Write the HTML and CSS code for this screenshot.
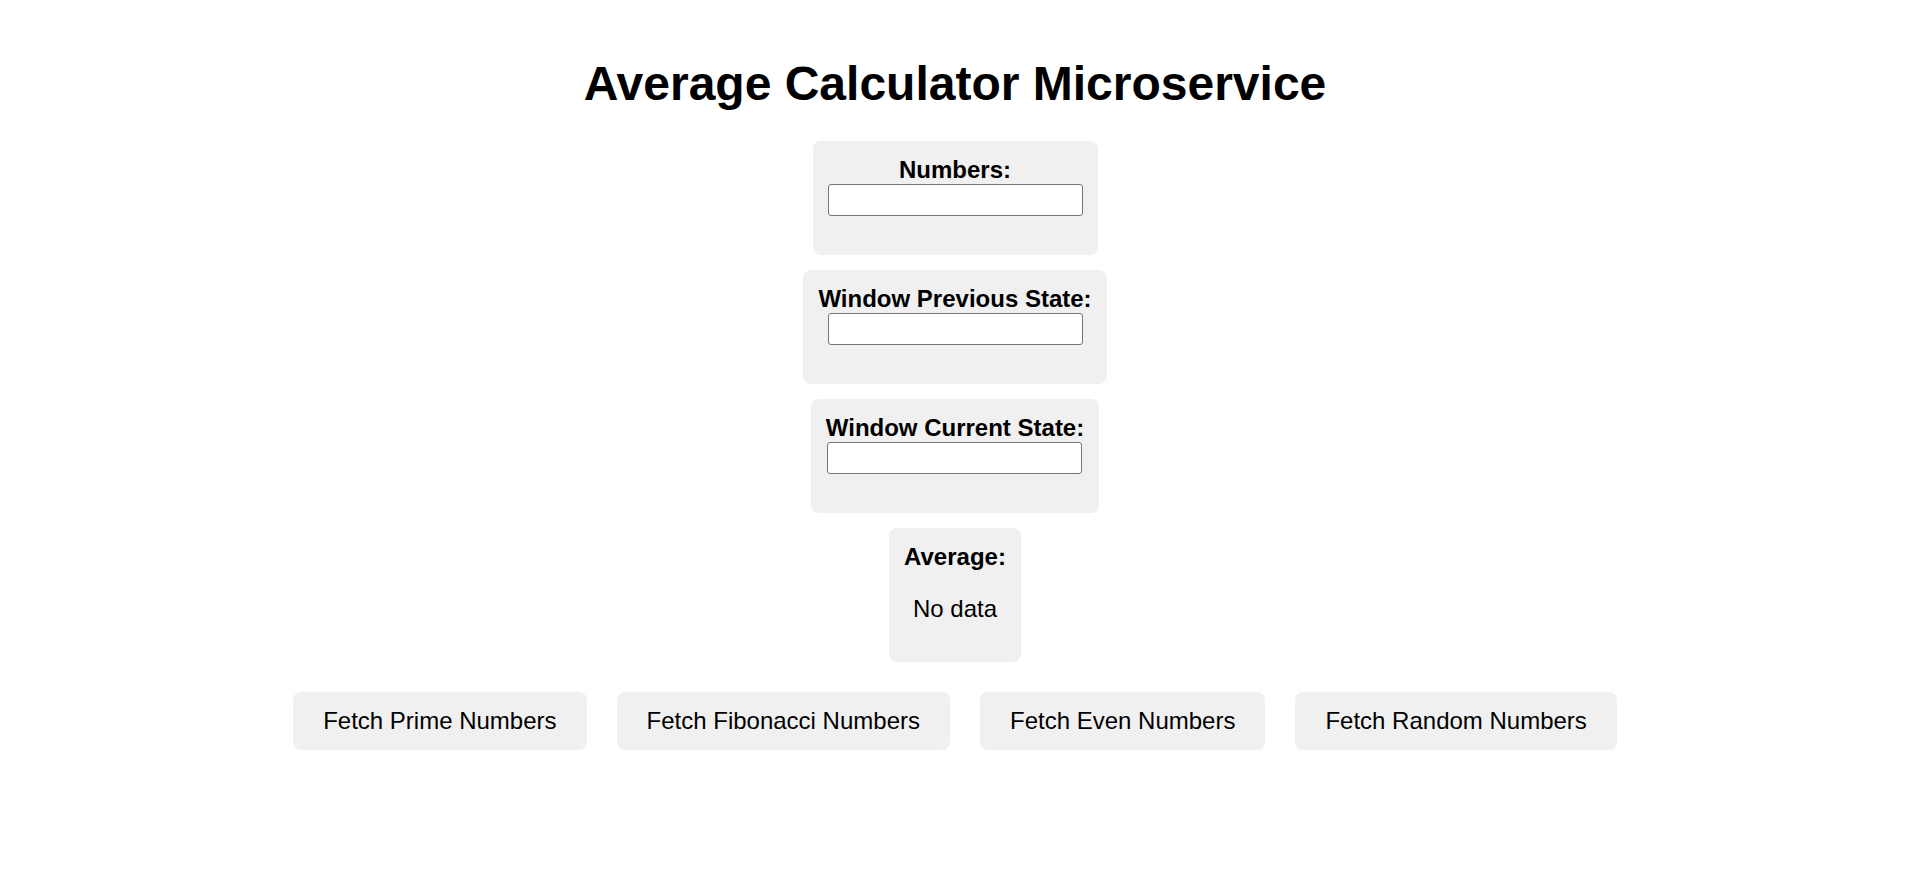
FILE: index.html
```html
<!DOCTYPE html>
<html lang="en">
<head>
<meta charset="utf-8">
<title>Average Calculator Microservice</title>
<link rel="stylesheet" href="styles.css">
</head>
<body>
<div class="app">
  <h1 class="title">Average Calculator Microservice</h1>
  <div class="cards">
    <div class="card">
      <label class="card-label" for="numbers">Numbers:</label>
      <input class="card-input" id="numbers" type="text">
    </div>
    <div class="card">
      <label class="card-label" for="prev">Window Previous State:</label>
      <input class="card-input" id="prev" type="text">
    </div>
    <div class="card">
      <label class="card-label" for="curr">Window Current State:</label>
      <input class="card-input" id="curr" type="text">
    </div>
    <div class="card">
      <div class="card-label">Average:</div>
      <p class="card-value">No data</p>
    </div>
  </div>
  <div class="actions">
    <button class="btn" type="button">Fetch Prime Numbers</button>
    <button class="btn" type="button">Fetch Fibonacci Numbers</button>
    <button class="btn" type="button">Fetch Even Numbers</button>
    <button class="btn" type="button">Fetch Random Numbers</button>
  </div>
</div>
</body>
</html>
```

FILE: styles.css
```css
html, body {
  margin: 0;
  padding: 0;
  background: #ffffff;
}

body {
  font-family: "Liberation Sans", Arial, sans-serif;
  font-size: 24px;
  color: #000000;
}

.app {
  padding-top: 56px;
  text-align: center;
}

.title {
  margin: 0 0 30px;
  font-size: 48px;
  font-weight: bold;
  line-height: normal;
}

.cards {
  display: flex;
  flex-direction: column;
  align-items: center;
  gap: 15px;
}

.card {
  background: #f0f0f0;
  border-radius: 8px;
  padding: 15px;
  display: flex;
  flex-direction: column;
  align-items: center;
}

.card-label {
  display: block;
  font-weight: bold;
  font-size: 24px;
  line-height: normal;
}

.card-input {
  display: block;
  box-sizing: border-box;
  width: 255px;
  height: 32px;
  margin: 0 0 24px;
  padding: 2px 3px;
  border: 1px solid #767676;
  border-radius: 3px;
  background: #ffffff;
  font-family: "Liberation Sans", Arial, sans-serif;
  font-size: 20px;
}

.card-value {
  margin: 24px 0;
  font-size: 24px;
  line-height: normal;
}

.actions {
  display: flex;
  justify-content: center;
  gap: 30px;
  margin-top: 30px;
}

.btn {
  background: #f0f0f0;
  border: none;
  border-radius: 8px;
  padding: 15px 30px;
  font-family: "Liberation Sans", Arial, sans-serif;
  font-size: 24px;
  line-height: normal;
  color: #000000;
  cursor: pointer;
}
```
